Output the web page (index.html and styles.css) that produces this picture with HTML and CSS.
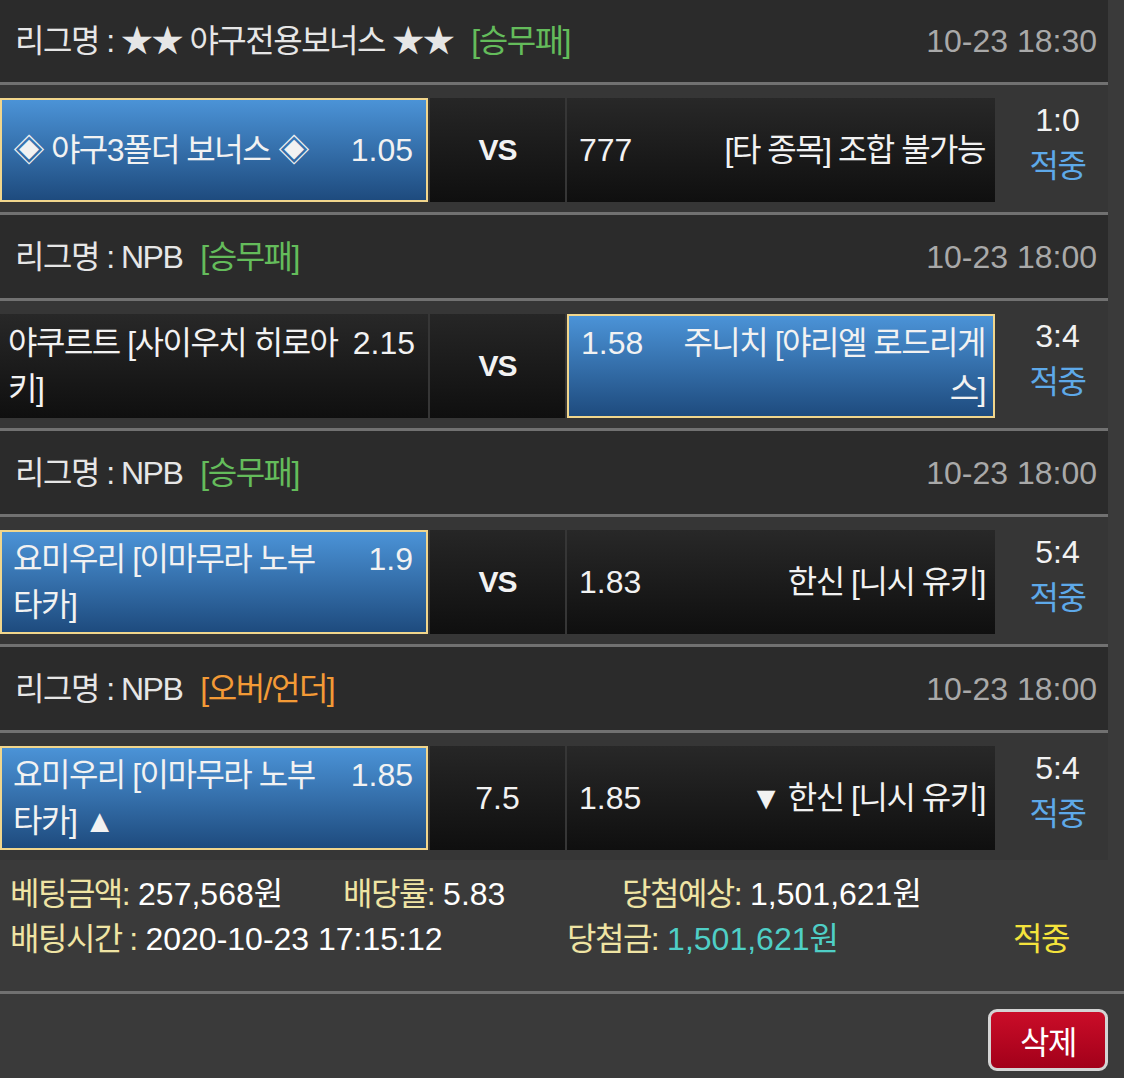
FILE: index.html
```html
<!DOCTYPE html>
<html lang="ko">
<head>
  <meta charset="UTF-8" />
  <meta name="viewport" content="width=device-width, initial-scale=1.0"/>
  <title>베팅내역</title>
  <link rel="stylesheet" href="styles.css">
</head>
<body>
  <div class="bet-list">
    <!-- 1: bonus -->
    <div class="league">
      <div class="league-name">리그명 : ★★ 야구전용보너스 ★★<span class="market win">[승무패]</span></div>
      <div class="kickoff">10-23 18:30</div>
    </div>
    <div class="match">
      <div class="pick home on">
        <span class="team">◈ 야구3폴더 보너스 ◈</span>
        <span class="odds">1.05</span>
      </div>
      <div class="mid vs">VS</div>
      <div class="pick away">
        <span class="odds">777</span>
        <span class="team">[타 종목] 조합 불가능</span>
      </div>
      <div class="result">
        <div class="score">1:0</div>
        <div class="hit">적중</div>
      </div>
    </div>

    <!-- 2 -->
    <div class="league">
      <div class="league-name">리그명 : NPB<span class="market win">[승무패]</span></div>
      <div class="kickoff">10-23 18:00</div>
    </div>
    <div class="match">
      <div class="pick home">
        <span class="team">야쿠르트 [사이우치 히로아키]</span>
        <span class="odds">2.15</span>
      </div>
      <div class="mid vs">VS</div>
      <div class="pick away on">
        <span class="odds">1.58</span>
        <span class="team">주니치 [야리엘 로드리게스]</span>
      </div>
      <div class="result">
        <div class="score">3:4</div>
        <div class="hit">적중</div>
      </div>
    </div>

    <!-- 3 -->
    <div class="league">
      <div class="league-name">리그명 : NPB<span class="market win">[승무패]</span></div>
      <div class="kickoff">10-23 18:00</div>
    </div>
    <div class="match">
      <div class="pick home on">
        <span class="team">요미우리 [이마무라 노부타카]</span>
        <span class="odds">1.9</span>
      </div>
      <div class="mid vs">VS</div>
      <div class="pick away">
        <span class="odds">1.83</span>
        <span class="team">한신 [니시 유키]</span>
      </div>
      <div class="result">
        <div class="score">5:4</div>
        <div class="hit">적중</div>
      </div>
    </div>

    <!-- 4: over/under -->
    <div class="league">
      <div class="league-name">리그명 : NPB<span class="market ou">[오버/언더]</span></div>
      <div class="kickoff">10-23 18:00</div>
    </div>
    <div class="match">
      <div class="pick home on">
        <span class="team">요미우리 [이마무라 노부타카] ▲</span>
        <span class="odds">1.85</span>
      </div>
      <div class="mid">7.5</div>
      <div class="pick away">
        <span class="odds">1.85</span>
        <span class="team">▼ 한신 [니시 유키]</span>
      </div>
      <div class="result">
        <div class="score">5:4</div>
        <div class="hit">적중</div>
      </div>
    </div>
  </div>

  <div class="summary">
    <div class="sum-line">
      <div class="sum-stake"><span class="label">베팅금액:</span> <span class="value">257,568원</span></div>
      <div class="sum-rate"><span class="label">배당률:</span> <span class="value">5.83</span></div>
      <div><span class="label">당첨예상:</span> <span class="value">1,501,621원</span></div>
    </div>
    <div class="sum-line">
      <div class="sum-time"><span class="label">배팅시간 :</span> <span class="value">2020-10-23 17:15:12</span></div>
      <div class="sum-prize"><span class="label">당첨금:</span> <span class="value prize">1,501,621원</span></div>
      <div class="final-hit">적중</div>
    </div>
  </div>

  <div class="actions">
    <button class="del-btn">삭제</button>
  </div>
</body>
</html>
```

FILE: styles.css
```css
* {
  margin: 0;
  padding: 0;
  box-sizing: border-box;
}

body {
  background: #3a3a3a;
  font-family: "Liberation Sans", "Noto Sans CJK KR", sans-serif;
  font-size: 32px;
  line-height: 46px;
  color: #f2f2f2;
}

.bet-list {
  width: 1108px;
}

/* League header */
.league {
  display: flex;
  justify-content: space-between;
  align-items: center;
  height: 89px;
  padding: 0 11px 0 15px;
  background: #2b2b2b;
  border-top: 3px solid #717171;
  border-bottom: 3px solid #717171;
}

.league:first-child {
  border-top: 0;
  height: 85px;
}

.league-name {
  color: #e6e6e6;
  letter-spacing: -1.5px;
}

.market {
  margin-left: 18px;
}

.market.win {
  color: #64bc5b;
}

.market.ou {
  color: #f39a36;
}

.kickoff {
  color: #a9a9a9;
}

/* Match row */
.match {
  display: grid;
  grid-template-columns: 428px 135px 428px 1fr;
  column-gap: 2px;
  align-items: center;
  height: 127px;
  padding: 12px 0 11px;
  background: #363636;
}

.pick {
  height: 104px;
  display: flex;
  flex-wrap: wrap;
  align-content: center;
  align-items: flex-start;
  background: linear-gradient(#282828, #0f0f0f);
}

.pick.home {
  padding: 0 13px 0 8px;
}

.pick.away {
  padding: 0 10px 0 12px;
}

.pick.on {
  background: linear-gradient(#4b93d7, #1e4b7e);
  border: 2px solid #f1d68c;
}

.pick.home.on {
  padding-left: 11px;
}

.pick.away.on {
  padding-right: 8px;
}

.team {
  flex: 1;
  letter-spacing: -1.5px;
}

.away .team {
  text-align: right;
}

.odds {
  width: 73.5px;
}

.home .odds {
  text-align: right;
}

.away .odds {
  width: 78px;
}

.mid {
  height: 104px;
  display: flex;
  align-items: center;
  justify-content: center;
  background: linear-gradient(#262626, #0f0f0f);
}

.mid.vs {
  font-size: 30px;
  font-weight: bold;
  letter-spacing: -1px;
}

.result {
  text-align: center;
  padding: 0 0 14px 10px;
}

.hit {
  color: #5ea9e9;
  letter-spacing: -1.5px;
}

/* Totals */
.summary {
  padding: 12px 0 29px 10px;
  line-height: 45px;
  border-bottom: 3px solid #717171;
}

.sum-line {
  display: flex;
  white-space: nowrap;
}

.sum-stake { width: 333px; }
.sum-rate { width: 279px; }
.sum-time { width: 557px; }
.sum-prize { width: 446px; }

.label {
  color: #efe4a4;
  letter-spacing: -1.5px;
}

.value {
  color: #fff;
}

.value.prize {
  color: #4fcfc6;
}

.final-hit {
  color: #f4e33c;
  letter-spacing: -1.5px;
}

.actions {
  display: flex;
  justify-content: flex-end;
  padding: 15px 16px 0 0;
}

.del-btn {
  width: 120px;
  height: 62px;
  border: 3px solid #d4d4d4;
  border-radius: 9px;
  background: linear-gradient(#ca0d28, #a2001a);
  color: #fff;
  font-family: inherit;
  font-size: 32px;
  letter-spacing: -1.5px;
  cursor: pointer;
}
```
